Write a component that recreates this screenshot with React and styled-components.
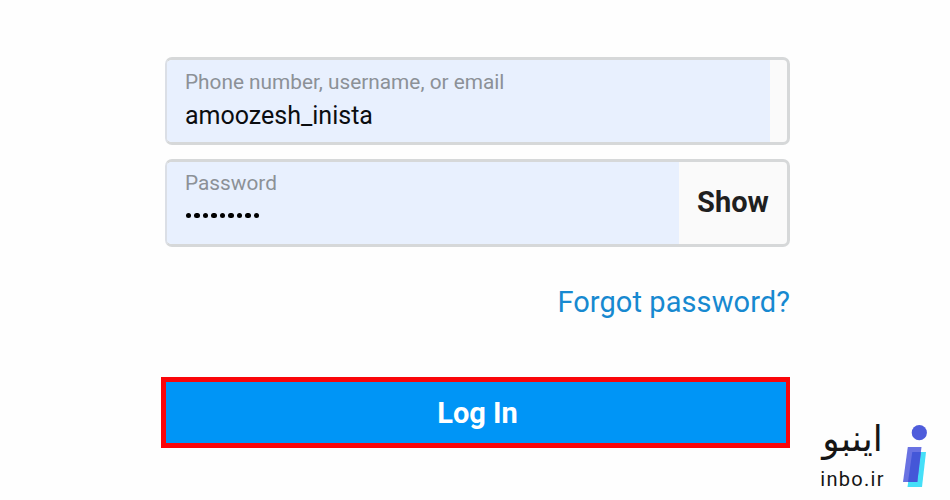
import React, { useState } from "react";
import styled, { createGlobalStyle } from "styled-components";

const GlobalStyle = createGlobalStyle`
  * {
    box-sizing: border-box;
  }
  body {
    margin: 0;
    background: #fefefe;
    font-family: Roboto, "Liberation Sans", sans-serif;
  }
`;

const Page = styled.div`
  display: grid;
  grid-template-columns: 161px 629px 1fr;
  height: 500px;
  overflow: hidden;
`;

const Form = styled.form`
  grid-column: 2;
  display: flex;
  flex-direction: column;
  padding-top: 57px;
`;

const Field = styled.div`
  display: flex;
  height: 88px;
  margin: 0 0 14px 4px;
  border: 2px solid #d6d8d9;
  border-width: 3px 3px 3px 2px;
  border-left-color: #dbdfe6;
  border-radius: 7px;
  background: #fafafa;
  overflow: hidden;
`;

const Filled = styled.label`
  display: flex;
  flex: 1;
  flex-direction: column;
  padding: ${(props) => props.$top}px 0 0 18px;
  background: #e8f0fe;
`;

const Caption = styled.span`
  font-size: 20.8px;
  line-height: 28px;
  color: #8c9197;
`;

const Value = styled.span`
  font-size: 25px;
  line-height: 39px;
  color: #0b0d10;
`;

const Dots = styled.span`
  display: flex;
  gap: 3.1px;
  padding: 16px 0 0 1px;
`;

const Dot = styled.i`
  width: 5.4px;
  height: 5.4px;
  border-radius: 50%;
  background: #000;
`;

const Side = styled.div`
  display: flex;
  align-items: center;
  justify-content: center;
  width: ${(props) => props.$width}px;
  padding-bottom: 2px;
  font-size: 29px;
  font-weight: 700;
  color: #1f1f1f;
`;

const Forgot = styled.a`
  align-self: flex-end;
  margin: 21px 0 0 0;
  font-size: 29px;
  line-height: 40px;
  letter-spacing: 0.08px;
  color: #1789d0;
`;

const Button = styled.button`
  height: 71px;
  margin-top: 55px;
  padding: 0 0 0 3px;
  border: 5px solid #fa0509;
  border-width: 5px 4px 5px 5px;
  background: #0095f6;
  color: white;
  font-family: inherit;
  font-size: 29px;
  font-weight: 700;
`;

const Brand = styled.div`
  display: flex;
  align-self: end;
  align-items: flex-start;
  gap: 17px;
  height: 80px;
  padding-left: 30px;
`;

const BrandText = styled.div`
  display: flex;
  flex-direction: column;
  align-items: center;
  width: 65px;
  color: #151515;
`;

const BrandName = styled.span`
  font-family: "DejaVu Sans", sans-serif;
  font-size: 36px;
  line-height: 38px;
  white-space: nowrap;
`;

const BrandSite = styled.span`
  margin-top: 8px;
  font-size: 20px;
  line-height: 26px;
  letter-spacing: 1.3px;
`;

function Logo() {
  return (
    <svg width="26" height="68" viewBox="0 0 26 68">
      <circle cx="17.3" cy="12.7" r="7.6" fill="#4e5cdb" />
      <path d="M10.5 32H24L20 67H5.5Z" fill="#45dff8" />
      <path d="M5.8 27H19.5L15.3 62H1Z" fill="#6972e2" />
      <path d="M10.3 32H18.9L15.3 62H6Z" fill="#4457d8" />
    </svg>
  );
}

function App() {
  const [username] = useState("amoozesh_inista");
  const [length] = useState(9);

  return (
    <>
      <GlobalStyle />
      <Page>
        <Form onSubmit={(e) => e.preventDefault()}>
          <Field>
            <Filled $top={8}>
              <Caption>Phone number, username, or email</Caption>
              <Value>{username}</Value>
            </Filled>
            <Side $width={17} />
          </Field>
          <Field>
            <Filled $top={7}>
              <Caption>Password</Caption>
              <Dots>
                {Array.from({ length }, (_, i) => (
                  <Dot key={i} />
                ))}
              </Dots>
            </Filled>
            <Side $width={108}>Show</Side>
          </Field>
          <Forgot>Forgot password?</Forgot>
          <Button type="submit">Log In</Button>
        </Form>
        <Brand>
          <BrandText>
            <BrandName dir="rtl" lang="fa">اینبو</BrandName>
            <BrandSite>inbo.ir</BrandSite>
          </BrandText>
          <Logo />
        </Brand>
      </Page>
    </>
  );
}

export default App;
